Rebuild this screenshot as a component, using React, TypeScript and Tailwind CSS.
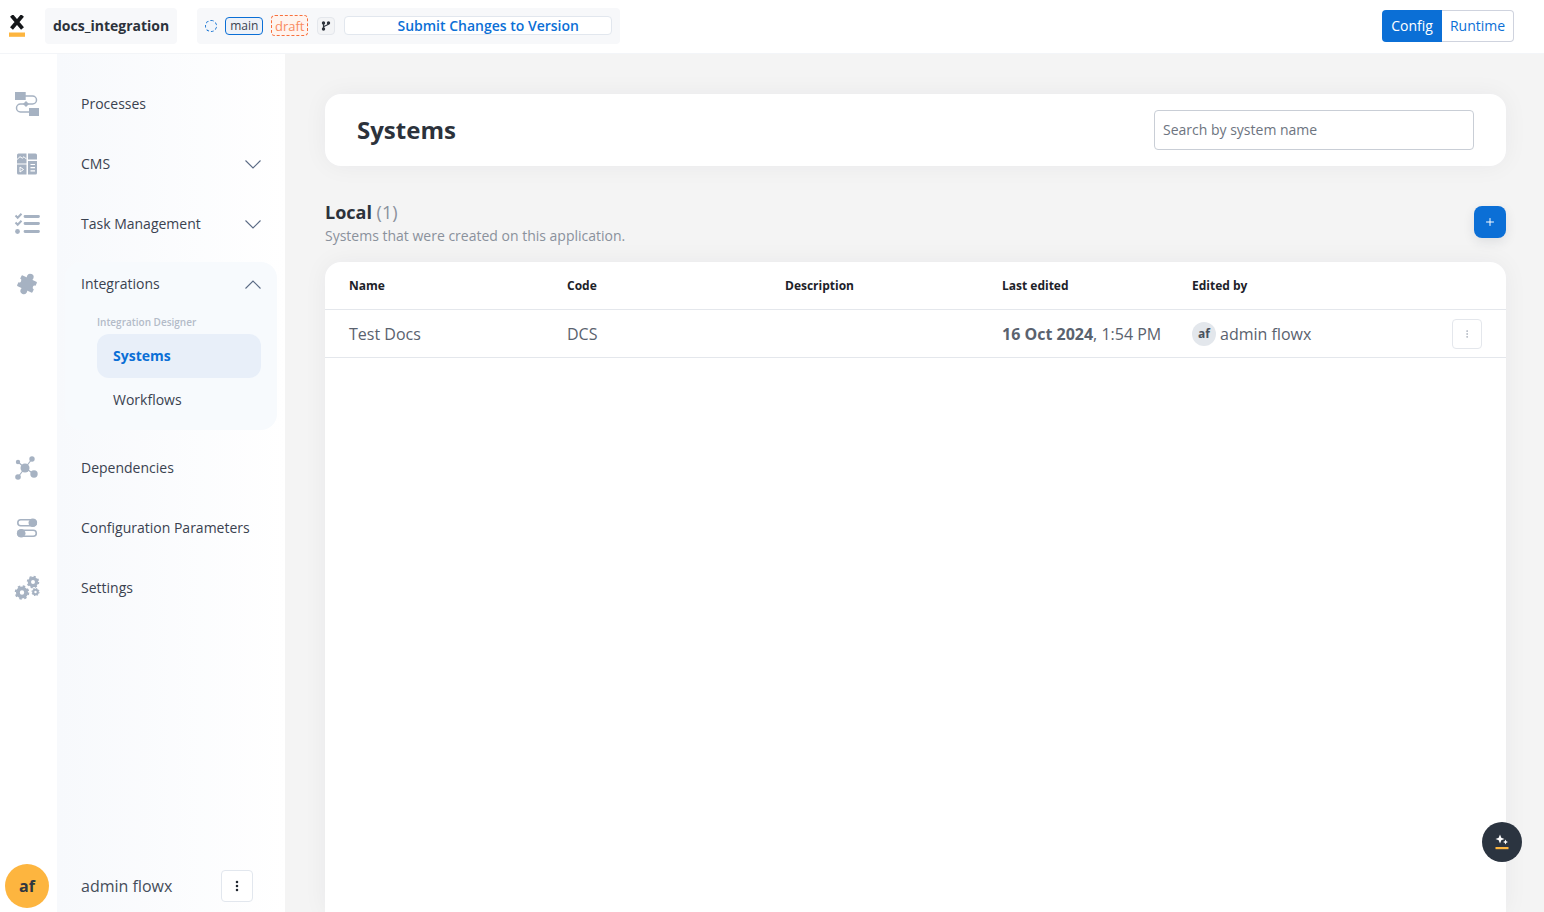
import { EllipsisVertical, Plus } from "lucide-react";

const iconColor = "#a6b2c2";

function ProcessIcon() {
  return (
    <svg width="26" height="26" viewBox="0 0 26 26" fill="none">
      <rect x="1" y="1" width="10.700" height="8" fill={iconColor} />
      <rect x="15" y="17" width="10" height="8" fill={iconColor} />
      <path d="M11 5h7.500a4 4 0 0 1 0 8H6.500a4 4 0 0 0 0 8H15" stroke={iconColor} strokeWidth="1.500" />
      <path d="M12 10l3 3-3 3-3-3z" fill={iconColor} />
    </svg>
  );
}

function CmsIcon() {
  return (
    <svg width="22" height="22" viewBox="0 0 22 22" fill="none">
      <path d="M2.500 0.500H10.500V10.500H1V2a1.500 1.500 0 0 1 1.500-1.500z" fill={iconColor} />
      <path d="M1 6.500l3-2.800 2.300 1.500 1.700-1.500 2.500 2.500" stroke="white" strokeWidth="1" />
      <path d="M12 0.500h7.500A1.500 1.500 0 0 1 21 2v4.500h-9z" fill={iconColor} />
      <path d="M1 11.500h9.500v10H2.500A1.500 1.500 0 0 1 1 20z" fill={iconColor} />
      <path d="M4 14v5l3.500-2.500z" stroke="white" strokeWidth="1" />
      <path d="M12 8h9v12a1.500 1.500 0 0 1-1.500 1.500H12z" fill={iconColor} />
      <path d="M14.500 11.500h4.500M14.500 14.700h4.500M14.500 17.900h4.500" stroke="white" strokeWidth="1.200" />
    </svg>
  );
}

function TasksIcon() {
  return (
    <svg width="26" height="22" viewBox="0 0 26 22" fill="none" stroke={iconColor}>
      <path d="M1.500 2.500l2.200 2.200 3.800-4M1.500 9.500l2.200 2.200 3.800-4" strokeWidth="2" />
      <circle cx="3.500" cy="18.500" r="2.400" fill={iconColor} stroke="none" />
      <path d="M11 3.500h13.500M11 10.500h13.500M11 18.500h13.500" strokeWidth="2.800" strokeLinecap="round" />
    </svg>
  );
}

function PuzzleIcon() {
  return (
    <svg width="24" height="24" viewBox="0 0 24 24" fill={iconColor}>
      <g transform="rotate(25 12 12)">
        <rect x="3.500" y="6" width="17" height="12" rx="1" />
        <circle cx="12" cy="4.500" r="3.400" />
        <circle cx="12" cy="19.500" r="3.400" />
        <circle cx="3.500" cy="12" r="2" fill="white" />
        <circle cx="20.500" cy="12" r="2" fill="white" />
      </g>
    </svg>
  );
}

function DependenciesIcon() {
  return (
    <svg width="24" height="24" viewBox="0 0 24 24" fill={iconColor} stroke={iconColor}>
      <path d="M10 12L3 6M10 12L17 3M10 12L3 21M10 12l9 6" strokeWidth="1.200" />
      <circle cx="10" cy="12" r="4.500" stroke="none" />
      <circle cx="3" cy="6" r="2.200" stroke="none" />
      <circle cx="17" cy="3" r="2.700" stroke="none" />
      <circle cx="3" cy="21" r="2.800" stroke="none" />
      <circle cx="19" cy="18" r="3.700" stroke="none" />
    </svg>
  );
}

function ToggleIcon() {
  return (
    <svg width="22" height="20" viewBox="0 0 22 20" fill="none">
      <rect x="1.800" y="1.800" width="18.500" height="6" rx="3" stroke={iconColor} strokeWidth="1.600" />
      <circle cx="16.800" cy="4.800" r="4.300" fill={iconColor} />
      <rect x="1.800" y="12.200" width="18.500" height="6" rx="3" stroke={iconColor} strokeWidth="1.600" />
      <circle cx="5.200" cy="15.200" r="4.300" fill={iconColor} />
    </svg>
  );
}

function Gear({ cx, cy, r, hole }: { cx: number; cy: number; r: number; hole: number }) {
  const body = r * 0.84;
  const teethRadius = r * 0.88;
  const tooth = (2 * Math.PI * teethRadius) / 16;
  return (
    <g fill="none" stroke={iconColor}>
      <circle cx={cx} cy={cy} r={(body + hole) / 2} strokeWidth={body - hole} />
      <circle cx={cx} cy={cy} r={teethRadius} strokeWidth={r * 0.26} strokeDasharray={`${tooth} ${tooth}`} />
    </g>
  );
}

function GearsIcon() {
  return (
    <svg width="26" height="26" viewBox="0 0 26 26">
      <Gear cx={8} cy={17.500} r={7.200} hole={2.200} />
      <Gear cx={19} cy={7} r={6.200} hole={2} />
      <Gear cx={21.500} cy={17} r={4} hole={1.200} />
    </svg>
  );
}

function Chevron({ up }: { up?: boolean }) {
  return (
    <svg width="16" height="9" viewBox="0 0 16 9" fill="none" stroke="#5b6b85" strokeWidth="1.100">
      <path d={up ? "M0.500 8.500L8 1l7.500 7.500" : "M0.500 0.500L8 8l7.500-7.500"} />
    </svg>
  );
}

function RailSlot({ children }: { children: React.ReactNode }) {
  return <div className="h-[60px] flex items-center justify-center pr-[3px]">{children}</div>;
}

function NavItem({ label, collapsed }: { label: string; collapsed?: boolean }) {
  return (
    <div className="h-[60px] flex items-center justify-between pl-6 pr-6 text-sm text-[#3a4250]">
      <span>{label}</span>
      {collapsed && <Chevron />}
    </div>
  );
}

function Sidebar() {
  return (
    <aside className="w-[285px] h-full shrink-0 flex bg-white">
      <div className="w-[57px] shrink-0 flex flex-col pt-5">
        <RailSlot><ProcessIcon /></RailSlot>
        <RailSlot><CmsIcon /></RailSlot>
        <RailSlot><TasksIcon /></RailSlot>
        <RailSlot><PuzzleIcon /></RailSlot>
        <div className="h-[124px]" />
        <RailSlot><DependenciesIcon /></RailSlot>
        <RailSlot><ToggleIcon /></RailSlot>
        <RailSlot><GearsIcon /></RailSlot>
        <div className="mt-auto mb-1 ml-[5px] size-11 rounded-full bg-[#fdb53f] flex items-center justify-center text-base font-bold text-[#2f3640]">
          af
        </div>
      </div>
      <div className="flex-1 flex flex-col pt-5 bg-gradient-to-r from-[#f7f9fc] to-white">
        <NavItem label="Processes" />
        <NavItem label="CMS" collapsed />
        <NavItem label="Task Management" collapsed />
        <div className="mt-2 ml-2 mr-2 mb-2 h-[168px] rounded-2xl bg-[#f7fafd] text-sm">
          <div className="h-11 flex items-center justify-between pl-4 pr-4 text-[#3a4250]">
            <span>Integrations</span>
            <Chevron up />
          </div>
          <p className="mt-[9px] ml-8 h-[19px] text-[10px] font-semibold leading-[14px] text-[#b3bbc8]">Integration Designer</p>
          <div className="ml-8 mr-4 h-11 rounded-xl bg-[#e8eff9] flex items-center pl-4 font-bold text-[#0b6fd6]">Systems</div>
          <div className="ml-8 mr-4 h-11 flex items-center pl-4 text-[#3a4250]">Workflows</div>
        </div>
        <NavItem label="Dependencies" />
        <NavItem label="Configuration Parameters" />
        <NavItem label="Settings" />
        <div className="mt-auto mb-2.5 h-8 flex items-center justify-between pl-6 pr-8">
          <span className="text-base text-[#454d5a]">admin flowx</span>
          <button className="size-8 rounded border border-[#e2e7ee] bg-white flex items-center justify-center text-[#20262e]">
            <EllipsisVertical size={14} strokeWidth={2.400} />
          </button>
        </div>
      </div>
    </aside>
  );
}

function TopBar() {
  return (
    <header className="h-[54px] shrink-0 flex items-center pb-[2px] bg-white border-b border-[#f3f5f8]">
      <div className="w-[45px] shrink-0 pl-[9px]">
        <svg width="16" height="22" viewBox="0 0 16 22" className="block">
          <path d="M2.500 0.500L13.500 13.500M13.500 0.500L2.500 13.500" stroke="#15171a" strokeWidth="3.800" />
          <rect x="0" y="17.500" width="16" height="4.300" fill="#fdb53f" />
        </svg>
      </div>
      <div className="h-9 px-2 rounded bg-[#f7f8fa] flex items-center text-sm font-bold text-[#2c323b]">docs_integration</div>
      <div className="ml-5 w-[423px] h-9 rounded bg-[#f7f8fa] flex items-center pl-2 pr-2">
        <span className="size-3 rounded-full border border-dashed border-[#1a75d2] bg-[#f2f6fb]" />
        <span className="ml-2 h-[18px] w-[38px] rounded border border-[#0b6fd6] bg-[#eef2f8] flex items-center justify-center text-xs text-[#3a4250]">main</span>
        <span className="ml-2 h-[21px] w-[37px] rounded border border-dashed border-[#f8703c] bg-[#fff4ef] flex items-center justify-center pt-[2px] text-[13px] text-[#f98a5f]">draft</span>
        <span className="ml-[9px] size-[18px] rounded border border-[#e4e7ec] bg-[#f3f4f6] flex items-center justify-center">
          <svg width="10" height="10" viewBox="0 0 10 10" fill="#2c323b" stroke="#2c323b">
            <path d="M2.500 2v6M7.500 2.500C7.500 5 2.500 4 2.500 6.500" strokeWidth="1.200" fill="none" />
            <circle cx="2.500" cy="2" r="1.700" stroke="none" />
            <circle cx="7.500" cy="2" r="1.700" stroke="none" />
            <circle cx="2.500" cy="8" r="1.700" stroke="none" />
          </svg>
        </span>
        <button className="ml-[9px] flex-1 h-[19px] pl-5 rounded-sm border border-[#e2e7ee] bg-white text-sm font-semibold leading-none text-[#0b6fd6]">
          Submit Changes to Version
        </button>
      </div>
      <div className="ml-auto mr-[30px] h-8 flex text-sm">
        <span className="w-[60px] rounded-l bg-[#0b6fd6] flex items-center justify-center text-white">Config</span>
        <span className="w-[72px] rounded-r border border-l-0 border-[#cfd3de] bg-white flex items-center justify-center text-[#0b6fd6]">Runtime</span>
      </div>
    </header>
  );
}

const columns = "grid grid-cols-[218px_218px_217px_190px_1fr] items-center pl-6 pr-6";

function SystemsTable() {
  return (
    <div className="mt-[14px] flex-1 rounded-t-2xl bg-white shadow-[0_0_24px_rgba(30,40,60,0.05)]">
      <div className={`${columns} h-12 border-b border-[#e4e7ec] text-xs font-bold text-[#1d2229]`}>
        <span>Name</span>
        <span>Code</span>
        <span>Description</span>
        <span>Last edited</span>
        <span>Edited by</span>
      </div>
      <div className={`${columns} h-12 border-b border-[#e4e7ec] text-base text-[#5a626e]`}>
        <span>Test Docs</span>
        <span>DCS</span>
        <span />
        <span>
          <b className="font-bold">16 Oct 2024</b>, 1:54 PM
        </span>
        <div className="flex items-center">
          <span className="size-6 rounded-full bg-[#e3e7ec] flex items-center justify-center text-xs font-bold text-[#49515c]">af</span>
          <span className="ml-1">admin flowx</span>
          <button className="ml-auto size-[30px] rounded border border-[#e4e7ec] bg-white flex items-center justify-center text-[#a9b1bc]">
            <EllipsisVertical size={10} strokeWidth={2} />
          </button>
        </div>
      </div>
    </div>
  );
}

export default function App() {
  return (
    <div className="h-screen overflow-hidden flex flex-col bg-white font-['Open_Sans',sans-serif]">
      <TopBar />
      <div className="flex-1 min-h-0 flex">
        <Sidebar />
        <main className="relative flex-1 min-w-0 flex flex-col bg-[#f4f4f4] pt-10 pl-10 pr-[38px]">
          <div className="h-[72px] shrink-0 rounded-2xl bg-white shadow-[0_0_24px_rgba(30,40,60,0.05)] flex items-center justify-between pl-8 pr-8">
            <h1 className="text-2xl font-bold text-[#2c323b]">Systems</h1>
            <input
              placeholder="Search by system name"
              className="w-80 h-10 rounded border border-[#c9ced6] bg-white px-2 pb-[2px] text-sm text-[#3a4250] placeholder:text-[#6d7480] outline-none"
            />
          </div>
          <div className="mt-[34px] h-[48px] shrink-0 flex items-start justify-between">
            <div>
              <h2 className="text-lg leading-6 text-[#8a919c]">
                <b className="font-bold text-[#2c323b]">Local</b> (1)
              </h2>
              <p className="text-sm leading-6 text-[#8a919c]">Systems that were created on this application.</p>
            </div>
            <button className="mt-[6px] size-8 rounded-lg bg-[#0b6fd6] shadow-[0_4px_12px_rgba(30,40,60,0.1)] flex items-center justify-center text-white">
              <Plus size={12} strokeWidth={2} />
            </button>
          </div>
          <SystemsTable />
          <button className="absolute left-[1197px] top-[768px] size-10 rounded-full bg-[#2b3440] flex flex-col items-center justify-center">
            <svg width="16" height="18" viewBox="0 0 16 18" fill="white">
              <path d="M6 1.500l1.300 3.200 3.200 1.300-3.200 1.300L6 10.500 4.700 7.300 1.500 6l3.200-1.300z" />
              <path d="M11.500 6.500l.8 1.700 1.700.8-1.700.8-.8 1.700-.8-1.700L9 9l1.700-.8z" />
              <rect x="1.500" y="14" width="13" height="2.200" fill="#fdb53f" />
            </svg>
          </button>
        </main>
      </div>
    </div>
  );
}
